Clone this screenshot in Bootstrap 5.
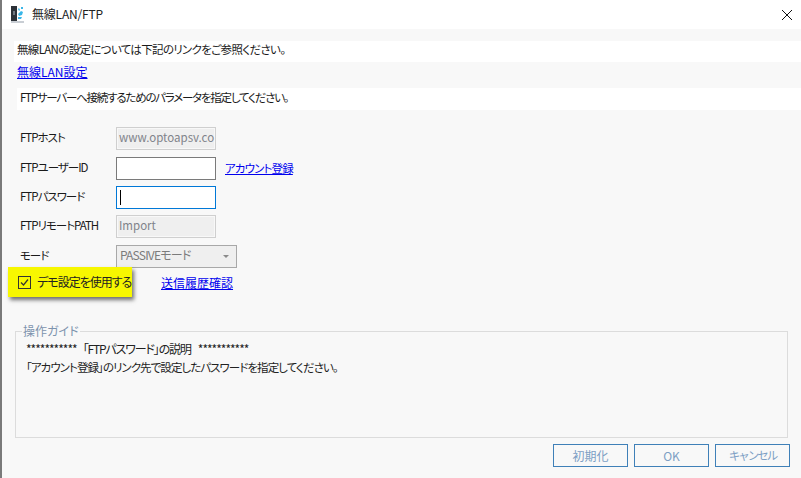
<!DOCTYPE html>
<html lang="ja">
<head>
<meta charset="utf-8">
<title>無線LAN/FTP</title>
<link href="https://cdn.jsdelivr.net/npm/bootstrap@5.3.0/dist/css/bootstrap.min.css" rel="stylesheet">
<style>
html,body{height:100%;overflow:hidden}
body{width:801px;height:478px;background:#f8f8f8;font-family:"Noto Sans CJK JP","Liberation Sans",sans-serif;font-feature-settings:"palt";font-size:12px;color:#1a1a1a;line-height:16px;border-left:2px solid #7a7a7a}
.titlebar{height:29px;background:#fff;margin-left:-2px;padding-left:10px;position:relative}
.tname{font-size:12px;margin-left:8px;color:#222;letter-spacing:-.2px;margin-top:-2px}
.closex{margin-right:8px}
.strip1{background:#fff;height:21px;margin:12px 0 0 12px;padding-left:3px;line-height:17px;font-size:11.5px;letter-spacing:-.67px}
.lk{color:#0000ee;text-decoration:underline}
.linkrow{height:26px;padding:1px 0 0 15px;line-height:18px}
.strip2{background:#fff;height:22px;margin-left:15px;padding-left:3px;line-height:18px;font-size:11.5px;letter-spacing:-1.23px}
.formarea{margin-top:17px;padding-left:18px}
.frow{height:23px;margin-bottom:6px}
.frow-wide{margin-bottom:7px}
.flabel{width:96px;flex:none;font-size:11.5px;white-space:nowrap;letter-spacing:-1px;padding-bottom:3px}
.fbox{width:100px;height:23px;background:#fff;border:1px solid #7a7a7a;padding:0 2px;font-size:12px;line-height:21px;color:#7b7b7b;overflow:hidden;white-space:nowrap;flex:none}
.fdis{background:#efefef;border-color:#cfcfcf;box-shadow:inset 0 0 0 1px #f8f8f8;font-size:11.5px;color:#80838a;line-height:19px}
.ffocus{border-color:#0078d7;display:flex;align-items:center}
.caretbar{width:1px;height:15px;background:#000;margin-left:1px}
.acct{margin:-2px 0 0 9px;font-size:11.5px;letter-spacing:-.85px}
.fsel{width:121px;height:23px;flex:none;background:#efefef;border:1px solid #a8a8a8;color:#7b7b7b;padding:0 0 3px 3px;line-height:18px;letter-spacing:-.8px}
.sarrow{width:0;height:0;border-left:3px solid transparent;border-right:3px solid transparent;border-top:3px solid #8a8a8a;margin:3px 7px 0 0}
.demorow{margin-top:-7px;height:30px;margin-left:-12px;position:relative}
.demobox{width:124px;height:30px;background:#f7f700;box-shadow:2px 3px 4px rgba(0,0,0,.55);padding-left:10px;flex:none;gap:6px;white-space:nowrap;color:#222;letter-spacing:-1px}
.demobox .form-check-input{width:13px;height:13px;margin:0;flex:none;border:1px solid #333;border-radius:0;background-color:transparent;opacity:1}
.demobox .form-check-input:checked{background-color:transparent;border-color:#333;background-image:url("data:image/svg+xml,%3Csvg xmlns='http://www.w3.org/2000/svg' viewBox='0 0 11 11'%3E%3Cpath d='M2 5.500l2.500 2.500L9 2.500' fill='none' stroke='%23333' stroke-width='1.200'/%3E%3C/svg%3E");background-size:11px 11px}
.hist{margin-left:29px;margin-top:2px}
.guide{position:relative;margin:34px 0 0 13px;width:773px;height:107px;border:1px solid #dcdcdc;padding:8px 0 0 10px;line-height:18px;color:#222}
.gtitle{position:absolute;left:6px;top:-9px;background:#f8f8f8;padding:0 1px;color:#7d93ad;line-height:16px}
.stars{letter-spacing:-1px}
.gmid{letter-spacing:-1.15px;margin:0 7px 0 6px}
.gline{font-size:11.5px;letter-spacing:-.94px}
.btnrow{margin:6px 0 0 551px;gap:6px}
.wbtn{width:75px;height:23px;background:#f8f8f8;border:1px solid #3f80b8;border-radius:0;color:#7d9fc4;font-size:12px;padding:0;line-height:21px}
.wbtn-kana{letter-spacing:-2px;font-size:11.5px}
</style>
</head>
<body>
<div class="titlebar d-flex align-items-center justify-content-between">
  <div class="d-flex align-items-center">
    <svg width="14" height="17" viewBox="0 0 14 17"><rect x="1" y="0" width="6" height="16" fill="#2c3138"/><rect x="3" y="5" width="2" height="4" fill="#6f7780"/><path d="M8 3l1-1 1 2-1 1zM11 1h2v2h-2zM8 8l3-3 2 1-1 3-3 1zM8 11h4l-1 2H8z" fill="#39b6e8"/><rect x="1" y="15" width="13" height="2" fill="#c9ced4"/></svg>
    <span class="tname">無線LAN/FTP</span>
  </div>
  <svg class="closex" width="12" height="12" viewBox="0 0 12 12"><path d="M1 1l10 10M11 1L1 11" stroke="#111" stroke-width="1" fill="none"/></svg>
</div>
<div class="strip1">無線LANの設定については下記のリンクをご参照ください。</div>
<div class="linkrow"><a class="lk" href="#">無線LAN設定</a></div>
<div class="strip2">FTPサーバーへ接続するためのパラメータを指定してください。</div>
<div class="formarea">
  <div class="frow frow-wide d-flex align-items-center"><div class="flabel">FTPホスト</div><div class="fbox fdis">www.optoapsv.co</div></div>
  <div class="frow d-flex align-items-center"><div class="flabel">FTPユーザーID</div><div class="fbox"></div><a class="lk acct" href="#">アカウント登録</a></div>
  <div class="frow d-flex align-items-center"><div class="flabel">FTPパスワード</div><div class="fbox ffocus"><span class="caretbar"></span></div></div>
  <div class="frow frow-wide d-flex align-items-center"><div class="flabel">FTPリモートPATH</div><div class="fbox fdis">Import</div></div>
  <div class="frow d-flex align-items-center"><div class="flabel">モード</div><div class="fsel d-flex align-items-center justify-content-between"><span>PASSIVEモード</span><span class="sarrow"></span></div></div>
  <div class="demorow d-flex align-items-center">
    <div class="demobox d-flex align-items-center">
      <input class="form-check-input" type="checkbox" checked aria-label="デモ設定を使用する">
      <span>デモ設定を使用する</span>
    </div>
    <a class="lk hist" href="#">送信履歴確認</a>
  </div>
</div>
<div class="guide">
  <div class="gtitle">操作ガイド</div>
  <div><span class="stars">***********</span><span class="gmid">「FTPパスワード」の説明</span><span class="stars">***********</span></div>
  <div class="gline">「アカウント登録」のリンク先で設定したパスワードを指定してください。</div>
</div>
<div class="btnrow d-flex">
  <button type="button" class="btn wbtn">初期化</button>
  <button type="button" class="btn wbtn">OK</button>
  <button type="button" class="btn wbtn wbtn-kana">キャンセル</button>
</div>
</body>
</html>
